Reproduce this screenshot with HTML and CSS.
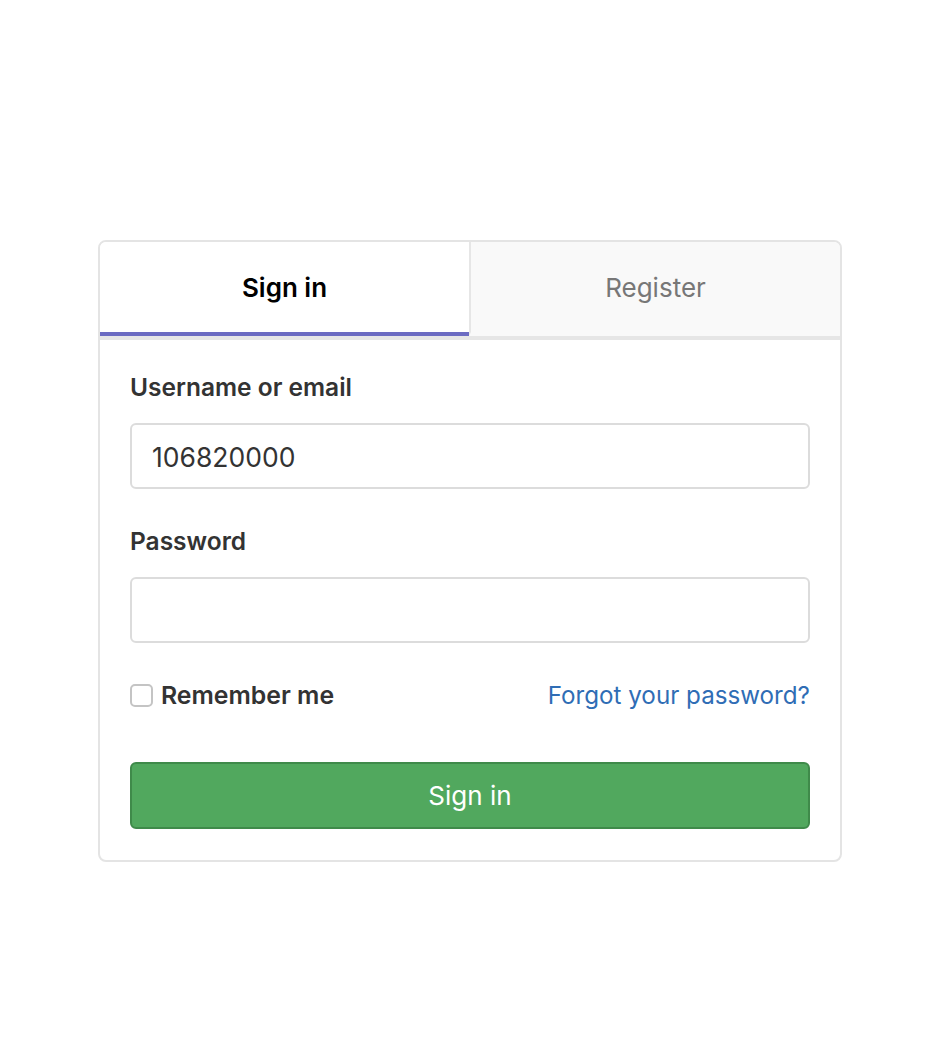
FILE: index.html
```html
<!DOCTYPE html>
<html lang="en">
<head>
<meta charset="utf-8">
<title>Sign in</title>
<link rel="stylesheet" href="styles.css">
</head>
<body>
<div class="page">
  <div class="card">
    <div class="tabs">
      <div class="tab active">Sign in</div>
      <div class="tab">Register</div>
    </div>
    <form class="form">
      <label class="label" for="user">Username or email</label>
      <input class="input" id="user" type="text" value="106820000">
      <label class="label label-pw" for="pw">Password</label>
      <input class="input" id="pw" type="password">
      <div class="row">
        <label class="remember"><span class="check"></span>Remember me</label>
        <a class="forgot" href="#">Forgot your password?</a>
      </div>
      <button class="btn" type="button">Sign in</button>
    </form>
  </div>
</div>
</body>
</html>
```
FILE: styles.css
```css
html, body {
  margin: 0;
  padding: 0;
  background: #fff;
}
body {
  font-family: Inter, "Noto Sans", "Liberation Sans", sans-serif;
  color: #333;
}
.page {
  padding: 240px 0 0 98px;
}
.card {
  width: 740px;
  border: 2px solid #e4e4e4;
  border-radius: 8px;
  overflow: hidden;
}
.tabs {
  display: flex;
  border-bottom: 4px solid #e6e6e6;
}
.tab {
  flex: 1;
  height: 90px;
  display: flex;
  align-items: center;
  justify-content: center;
  font-size: 26px;
  color: #777;
  background: #f9f9f9;
  border-bottom: 4px solid transparent;
}
.tab + .tab {
  border-left: 2px solid #e6e6e6;
}
.tab.active {
  background: #fff;
  color: #000;
  font-weight: 600;
  border-bottom-color: #6b6bc2;
}
.form {
  display: flex;
  flex-direction: column;
  padding: 32px 30px 31px;
}
.label {
  font-size: 24.5px;
  line-height: 30px;
  font-weight: 600;
  color: #333;
  margin-bottom: 21px;
}
.label-pw {
  margin-top: 37px;
}
.input {
  box-sizing: border-box;
  width: 100%;
  height: 66px;
  border: 2px solid #dcdcdc;
  border-radius: 6px;
  padding: 2px 20px 0;
  font-family: inherit;
  font-size: 26.5px;
  color: #333;
  outline: none;
  margin: 0;
}
.row {
  display: flex;
  justify-content: space-between;
  align-items: center;
  margin-top: 37px;
  height: 30px;
}
.remember {
  display: flex;
  align-items: center;
  font-size: 24.8px;
  font-weight: 600;
  color: #333;
}
.check {
  box-sizing: border-box;
  width: 23px;
  height: 23px;
  border: 2px solid #c4c4c4;
  border-radius: 5px;
  margin-right: 8px;
}
.forgot {
  font-size: 24.2px;
  color: #2f6db5;
  text-decoration: none;
}
.btn {
  margin-top: 52px;
  height: 67px;
  border: 2px solid #3f8a4a;
  border-radius: 6px;
  background: #51a85e;
  color: #fff;
  font-family: inherit;
  font-size: 26px;
  cursor: pointer;
}
```
